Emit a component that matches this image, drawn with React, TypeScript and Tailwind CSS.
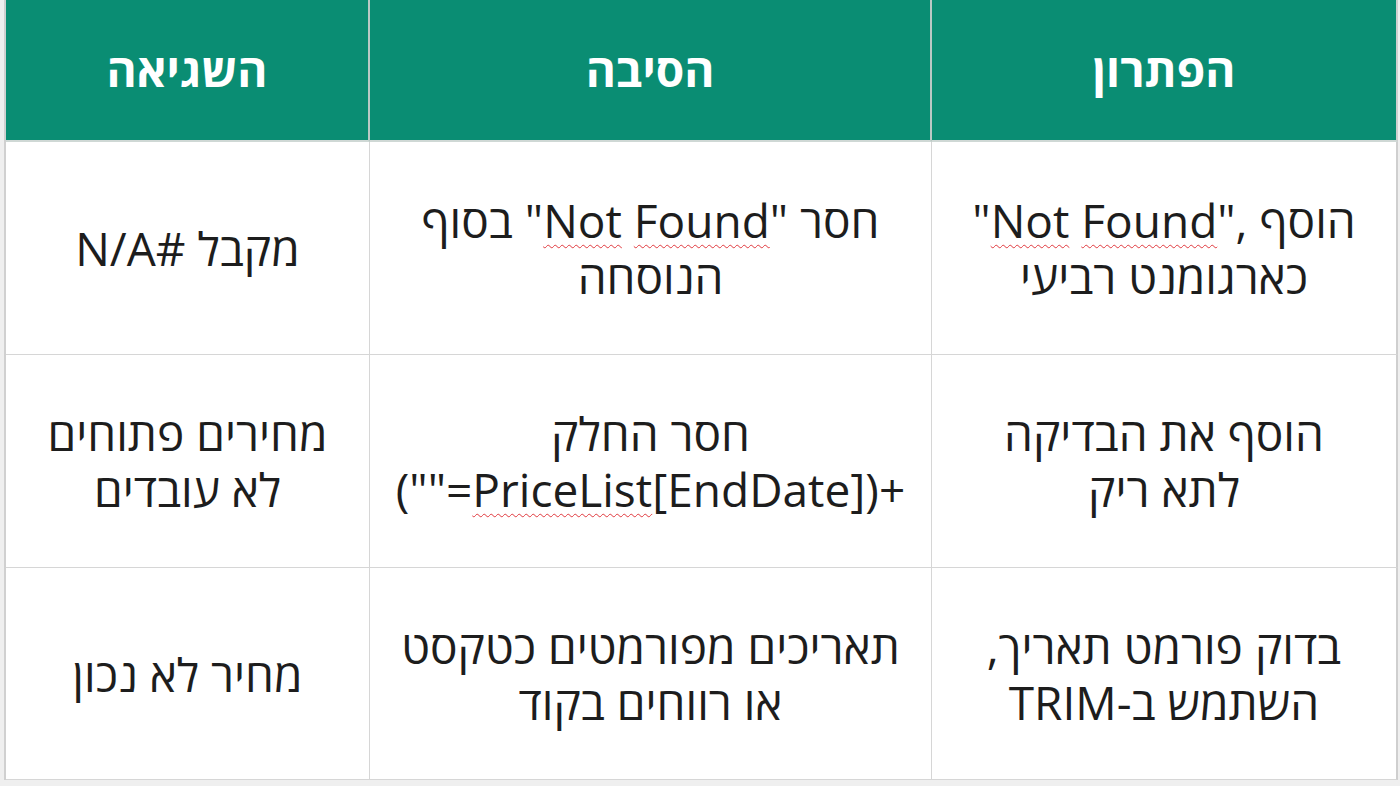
import React from 'react';

const font = { fontFamily: '"Open Sans", "DejaVu Sans", "Liberation Sans", sans-serif' };

function Wavy({ children }: { children: React.ReactNode }) {
  return (
    <span className="underline decoration-wavy decoration-[#e0393e] decoration-1 underline-offset-[6px]">
      {children}
    </span>
  );
}

function Cell({ children, last }: { children: React.ReactNode; last?: boolean }) {
  return (
    <div
      className={
        'flex items-center justify-center border-b border-[#d6d6d6] bg-white text-center text-[46px] leading-[56px] text-[#1d1d1d] ' +
        (last ? 'border-r-2 border-r-[#cfcfcf]' : 'border-r border-r-[#d6d6d6]')
      }
    >
      <div dir="rtl">{children}</div>
    </div>
  );
}

function Head({ title, last }: { title: string; last?: boolean }) {
  return (
    <div
      className={
        'flex items-center justify-center bg-[#0a8d73] border-b-2 border-[#cfd8d5] text-[46px] font-bold text-white ' +
        (last ? 'border-r-2 border-r-[#cfcfcf]' : 'border-r-2 border-r-[#b9c9c4]')
      }
    >
      <span dir="rtl" className="-mt-[2px]">{title}</span>
    </div>
  );
}

export default function App() {
  return (
    <div className="min-h-screen w-full bg-[#efefef] pl-[4px]" style={font}>
      <div className="grid w-[1392px] grid-cols-[364px_562px_466px] grid-rows-[142px_213px_213px_212px] border-l-2 border-[#d0d0d0]">
        <Head title="השגיאה" />
        <Head title="הסיבה" />
        <Head title="הפתרון" last />

        <Cell>מקבל #N/A</Cell>
        <Cell>
          <div>
            חסר "<Wavy>Not</Wavy> <Wavy>Found</Wavy>" בסוף
          </div>
          <div>הנוסחה</div>
        </Cell>
        <Cell last>
          <div dir="ltr">
            "<Wavy>Not</Wavy> <Wavy>Found</Wavy>", הוסף
          </div>
          <div>כארגומנט רביעי</div>
        </Cell>

        <Cell>
          <div>מחירים פתוחים</div>
          <div>לא עובדים</div>
        </Cell>
        <Cell>
          <div>חסר החלק</div>
          <div dir="ltr">
            (""=<Wavy>PriceList</Wavy>[EndDate])+
          </div>
        </Cell>
        <Cell last>
          <div>הוסף את הבדיקה</div>
          <div>לתא ריק</div>
        </Cell>

        <Cell>מחיר לא נכון</Cell>
        <Cell>
          <div>תאריכים מפורמטים כטקסט</div>
          <div>או רווחים בקוד</div>
        </Cell>
        <Cell last>
          <div>בדוק פורמט תאריך,</div>
          <div>השתמש ב-TRIM</div>
        </Cell>
      </div>
    </div>
  );
}
